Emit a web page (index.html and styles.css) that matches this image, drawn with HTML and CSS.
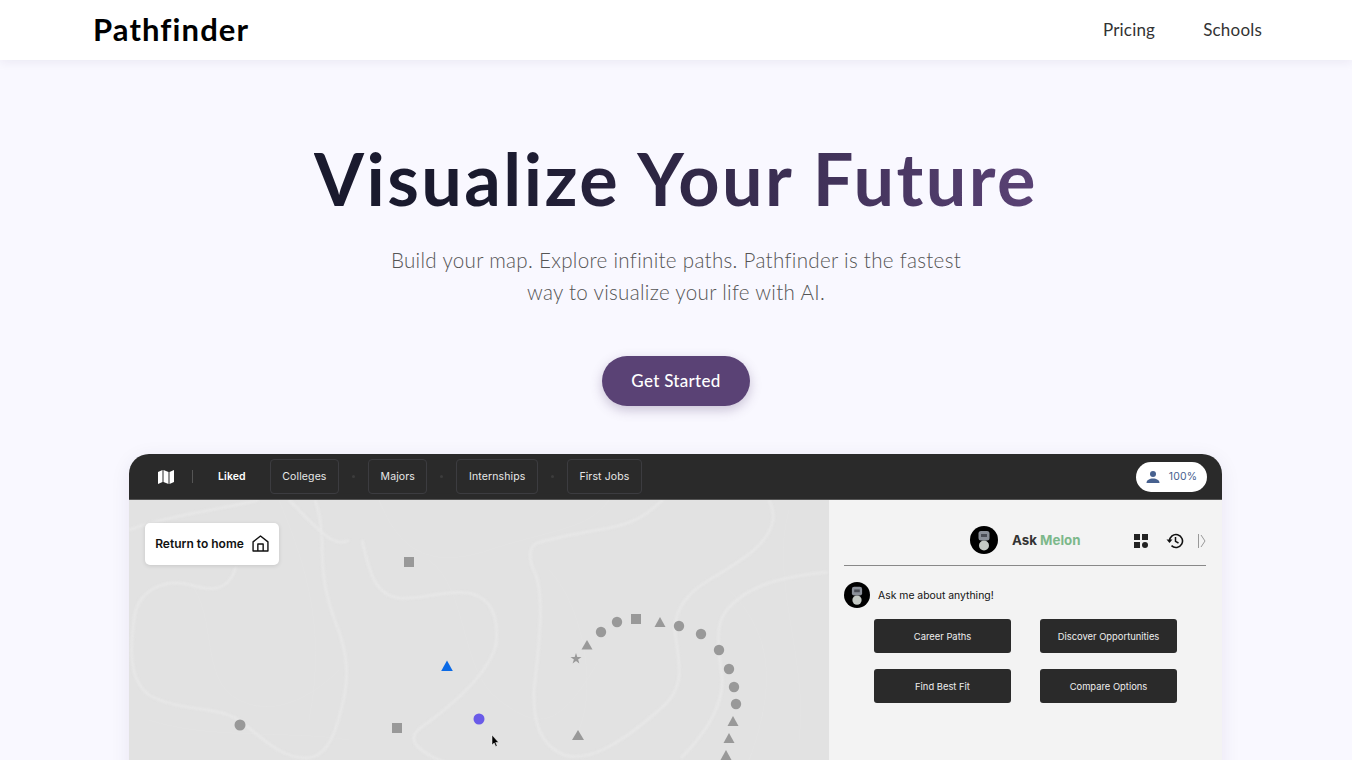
FILE: index.html
```html
<!DOCTYPE html>
<html lang="en">
<head>
<meta charset="utf-8">
<title>Pathfinder</title>
<link rel="stylesheet" href="styles.css">
</head>
<body>
<header class="nav">
  <a class="logo">Pathfinder</a>
  <nav class="nav-links"><a>Pricing</a><a>Schools</a></nav>
</header>
<main class="hero">
  <h1 class="title">Visualize Your Future</h1>
  <p class="sub">Build your map. Explore infinite paths. Pathfinder is the fastest<br>way to visualize your life with AI.</p>
  <button class="cta">Get Started</button>
  <section class="app">
    <div class="bar">
      <svg class="map-icon" viewBox="0 0 16 14"><path d="M0 2 4.500 0v12L0 14zM5.500 0l5 2v12l-5-2zM11.500 2 16 0v12l-4.500 2z" fill="#fff"/></svg>
      <span class="sep"></span>
      <span class="liked">Liked</span>
      <span class="chip">Colleges</span><i class="dot"></i>
      <span class="chip">Majors</span><i class="dot"></i>
      <span class="chip">Internships</span><i class="dot"></i>
      <span class="chip">First Jobs</span>
      <span class="pill">
        <svg class="user" viewBox="0 0 14 12"><circle cx="7" cy="3" r="3" fill="#47618f"/><path d="M0.500 12c0-3 3-4.500 6.500-4.500s6.500 1.500 6.500 4.500z" fill="#47618f"/></svg>
        100%
      </span>
    </div>
    <div class="body">
      <div class="map">
        <svg class="canvas" viewBox="0 0 700 300">
          <g class="faint">
            <path d="M60 80C90 120 70 180 110 200S190 190 210 170"/>
            <path d="M300 60C340 90 330 170 370 200S430 230 470 160"/>
            <path d="M420 70C450 100 470 180 450 230"/>
            <path d="M150 0C170 50 200 120 180 220"/>
            <path d="M20 220C80 240 160 230 220 240"/>
            <path d="M600 90C640 130 650 180 620 260"/>
            <path d="M250 0C270 50 300 70 360 50S460 30 480 0"/>
            <path d="M660 10C640 80 680 160 670 240"/>
          </g>
          <g class="contour">
            <path d="M107 67C100 90 85 92 62 85C35 78 8 90 5 120C1 150 0 180 20 195C50 212 85 205 110 220C130 235 150 258 177 258C195 258 205 240 212 210C222 175 218 150 205 118C195 90 193 70 193 40C192 20 190 10 186 0"/>
            <path d="M233 40C240 70 245 95 270 98C295 100 310 90 340 93C362 98 370 115 367 145C360 170 335 195 305 218C290 230 280 232 287 245C300 258 315 262 335 268"/>
            <path d="M534 0C520 12 510 22 480 28C450 33 425 38 408 43C398 48 400 62 407 75C414 95 412 130 405 190C404 225 412 245 435 255C460 262 490 245 530 210C555 190 552 170 547 140C542 115 555 95 580 80C610 62 640 45 644 20C645 10 642 4 640 0"/>
            <path d="M699 72C660 76 630 82 608 100C590 115 586 125 592 170C597 195 585 225 552 258"/>
            <path d="M160 0C185 25 205 50 220 40"/>
            <path d="M0 30C40 15 90 10 130 0"/>
          </g>
          <rect class="node" x="275" y="57" width="10" height="10"/>
          <rect class="node" x="263" y="223" width="10" height="10"/>
          <circle class="node" cx="111" cy="225" r="5.500"/>
          <polygon class="node-blue" points="318,160.500 323.800,171 312.200,171"/>
          <circle class="node-purple" cx="350" cy="219" r="5.500"/>
          <path class="cursor" d="M363 235v10l2.200-2 1.500 3.500 1.500-.7-1.500-3.300h3z"/>
          <polygon class="node" points="447,153 448.300,157 452.500,157 449.100,159.500 450.400,163.500 447,161 443.600,163.500 444.900,159.500 441.500,157 445.700,157"/>
          <polygon class="node" points="458,140 463.500,149.500 452.500,149.500"/>
          <circle class="node" cx="472" cy="132" r="5.200"/>
          <circle class="node" cx="488" cy="122" r="5.200"/>
          <rect class="node" x="502" y="114" width="10" height="10"/>
          <polygon class="node" points="531,117 536.500,127 525.500,127"/>
          <circle class="node" cx="550" cy="126" r="5.200"/>
          <circle class="node" cx="572" cy="134" r="5.200"/>
          <circle class="node" cx="590" cy="150" r="5.200"/>
          <circle class="node" cx="600" cy="169" r="5.200"/>
          <circle class="node" cx="605" cy="187" r="5.200"/>
          <circle class="node" cx="607" cy="204" r="5.200"/>
          <polygon class="node" points="604,216 609.500,226 598.500,226"/>
          <polygon class="node" points="600,233 605.500,243 594.500,243"/>
          <polygon class="node" points="597,250 602.500,260 591.500,260"/>
          <polygon class="node" points="449,230 455,240 443,240"/>
        </svg>
        <div class="home">Return to home
          <svg class="home-icon" viewBox="0 0 16 16"><path d="M1 6.500 8 1l7 5.500V15H1zM5.500 15V8.500h5V15" fill="none" stroke="#111" stroke-width="1.300" stroke-linejoin="round"/></svg>
        </div>
      </div>
      <aside class="side">
        <div class="side-head">
          <svg class="bot" viewBox="0 0 28 28"><circle cx="14" cy="14" r="14" fill="#000"/><rect x="8.500" y="5" width="11" height="9.500" rx="2.500" fill="#8a8f98"/><rect x="11" y="8" width="6" height="3" fill="#4a4d55"/><ellipse cx="14" cy="19.500" rx="5" ry="5" fill="#c4c9c4"/></svg>
          <span class="ask">Ask <em>Melon</em></span>
          <svg class="grid" viewBox="0 0 14 14"><rect width="6" height="6" fill="#222"/><rect x="8" width="6" height="6" fill="#222"/><rect y="8" width="6" height="6" fill="#222"/><circle cx="11" cy="11" r="3" fill="#222"/></svg>
          <svg class="hist" viewBox="0 0 18 18"><path d="M3.500 9a6.500 6.500 0 1 1 2 4.700" fill="none" stroke="#111" stroke-width="1.600"/><path d="M0.500 7.500h6l-3 3.500z" fill="#111"/><path d="M9.500 5v4.300l3 1.700" fill="none" stroke="#111" stroke-width="1.500"/></svg>
          <svg class="toggle" viewBox="0 0 8 14"><path d="M.5 0v14M3 1l4 6-4 6" fill="none" stroke="#999" stroke-width="1"/></svg>
        </div>
        <div class="msg">
          <svg class="bot small" viewBox="0 0 28 28"><circle cx="14" cy="14" r="14" fill="#000"/><rect x="8.500" y="5" width="11" height="9.500" rx="2.500" fill="#8a8f98"/><rect x="11" y="8" width="6" height="3" fill="#4a4d55"/><ellipse cx="14" cy="19.500" rx="5" ry="5" fill="#c4c9c4"/></svg>
          <span>Ask me about anything!</span>
        </div>
        <div class="actions">
          <button>Career Paths</button><button>Discover Opportunities</button>
          <button>Find Best Fit</button><button>Compare Options</button>
        </div>
      </aside>
    </div>
  </section>
</main>
</body>
</html>
```
FILE: styles.css
```css
* { box-sizing: border-box; }
html, body { margin: 0; height: 760px; overflow: hidden; }
body { background: #f9f8ff; font-family: "Lato", sans-serif; color: #111; }

.nav { height: 60px; background: #fff; display: flex; align-items: center; justify-content: space-between; padding: 0 90px 2px 94px; box-shadow: 0 2px 10px rgba(40, 30, 90, .07); position: relative; }
.logo { font-family: "Lato", sans-serif; font-size: 31px; font-weight: 700; color: #000; letter-spacing: 1.100px; margin-left: -1px; }
.nav-links { display: flex; gap: 48px; font-size: 17px; color: #333; letter-spacing: .2px; }

.hero { display: flex; flex-direction: column; align-items: center; padding-top: 78px; }
.title { margin: 0; font-size: 72px; line-height: 80px; font-weight: 700; letter-spacing: 2.450px; background: linear-gradient(90deg, #1a1a2e 0%, #1a1a2e 25%, #5a4275 100%); -webkit-background-clip: text; background-clip: text; color: transparent; }
.sub { margin: 26px 0 0; font-size: 20.600px; line-height: 32px; font-weight: 300; color: #555; text-align: center; letter-spacing: .3px; }
.cta { margin-top: 48px; width: 148px; height: 50px; padding: 0 0 2px; border: 0; border-radius: 25px; background: #5a4275; color: #fff; font: 500 17px "Lato", sans-serif; letter-spacing: .3px; box-shadow: 0 4px 12px rgba(90, 66, 117, .3); }

.app { margin: 48px 1px 0 0; width: 1093px; height: 600px; border-radius: 20px 20px 0 0; overflow: hidden; flex: none; box-shadow: 0 4px 20px rgba(40, 30, 90, .08); }
.bar { height: 46px; background: #2a2a2a; border-bottom: 1px solid #555; display: flex; align-items: center; padding: 0 15px 0 29px; color: #fff; font: 10.500px "Inter", sans-serif; letter-spacing: .12px; }
.map-icon { width: 16px; height: 14px; }
.sep { width: 1px; height: 13px; background: #555; margin: 0 25px 0 18px; }
.liked { font-weight: 600; margin-right: 24px; }
.chip { height: 35px; display: flex; align-items: center; padding: 0 11.500px; border: 1px solid #3c3c40; border-radius: 4px; color: #e8e8e8; }
.dot { width: 3px; height: 3px; border-radius: 50%; background: #3c3c3c; margin: 0 13px; }
.pill { margin-left: auto; width: 71px; height: 30px; border-radius: 15px; background: #fff; display: flex; align-items: center; justify-content: center; gap: 9px; color: #47618f; }
.user { width: 14px; height: 12px; }

.body { display: flex; height: 554px; }
.map { width: 700px; position: relative; background: #e2e2e2; flex: none; }
.canvas { position: absolute; left: 0; top: 0; width: 700px; height: 300px; }
.contour path { fill: none; stroke: #e8e8e8; stroke-width: 2.500; filter: blur(.8px); }
.faint path { fill: none; stroke: #e4e4e4; stroke-width: 1; }
.node { fill: #999; }
.node-blue { fill: #0b6ae6; }
.node-purple { fill: #6a5be8; }
.cursor { fill: #000; stroke: #fff; stroke-width: .5; }
.home { position: absolute; left: 16px; top: 23px; width: 134px; height: 42px; background: #fff; border-radius: 5px; box-shadow: 0 1px 4px rgba(0, 0, 0, .12); display: flex; align-items: center; justify-content: center; gap: 8px; padding-bottom: 1px; font: 600 12px "Inter", sans-serif; color: #111; white-space: nowrap; }
.home-icon { width: 17px; height: 17px; flex: none; }

.side { flex: 1; background: #f3f3f3; border-right: 1px solid #e4e4e4; padding: 26px 16px 0 15px; font-family: "Inter", sans-serif; }
.side-head { padding: 0 0 11px 126px; display: flex; align-items: center; border-bottom: 1px solid #888; box-sizing: content-box; height: 28px; }
.bot { width: 28px; height: 28px; flex: none; }
.bot.small { width: 26px; height: 26px; }
.ask { margin-left: 14px; font-size: 13.300px; font-weight: 700; color: #333; width: 122px; }
.ask em { font-style: normal; color: #7cb88a; }
.grid { width: 14px; height: 14px; margin-top: 2px; }
.hist { width: 18px; height: 18px; margin: 2px 0 0 18px; }
.toggle { width: 8px; height: 14px; margin: 2px 0 0 14px; }
.msg { display: flex; align-items: center; gap: 8px; margin-top: 16px; font-size: 10.400px; color: #111; }
.actions { display: grid; grid-template-columns: 137px 137px; column-gap: 29px; row-gap: 16px; margin: 11px 0 0 30px; }
.actions button { height: 34px; border: 0; border-radius: 3px; background: #2a2a2a; color: #eee; font: 9.400px "Inter", sans-serif; }
```
